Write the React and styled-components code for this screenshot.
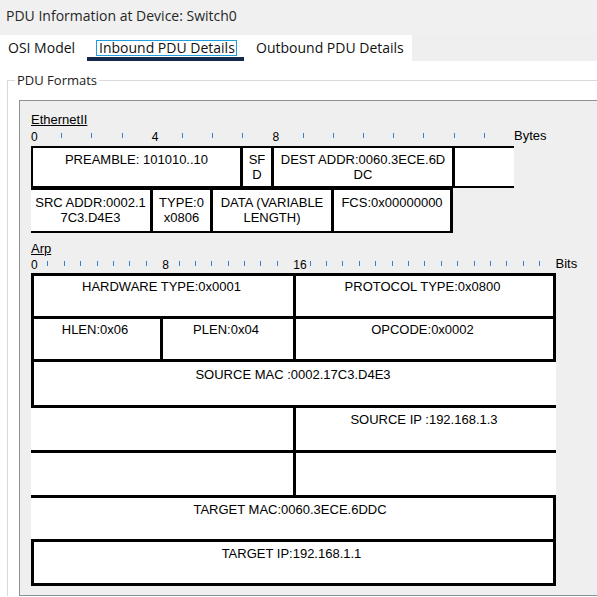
import React from "react"
import styled, { createGlobalStyle } from "styled-components"

const GlobalStyle = createGlobalStyle`
  html, body {
    margin: 0;
    padding: 0;
    background: #fff;
    overflow: hidden;
  }
`

const Window = styled.div`
  width: 597px;
  height: 597px;
  overflow: hidden;
  display: flex;
  flex-direction: column;
  font-family: "Open Sans", "Noto Sans", sans-serif;
`

const TitleBar = styled.div`
  height: 35px;
  box-sizing: border-box;
  background: #f0f0f0;
  padding: 6px 0 0 6px;
  font-size: 14px;
  color: #262626;
  white-space: nowrap;
`

const TabStrip = styled.div`
  display: flex;
  height: 26px;
  background: #efefef;
`

const Tab = styled.div`
  width: ${p => p.$w}px;
  box-sizing: border-box;
  height: 26px;
  background: #fff;
  padding: 3px 0 0 ${p => p.$pl}px;
  font-size: 14px;
  line-height: 19px;
  color: #111;
  white-space: nowrap;
  border-bottom: 4px solid ${p => (p.$active ? "#14294b" : "transparent")};
`

const FocusText = styled.span`
  display: inline-block;
  padding: 0 1px 0 2px;
  line-height: 14px;
  outline: 1px solid #1e9fdc;
`

const Body = styled.div`
  flex: 1;
  background: #fff;
  padding-left: 7px;
`

const Group = styled.fieldset`
  margin: 10px 0 0 0;
  padding: 0;
  min-width: 0;
  width: 640px;
  border: 1px solid #dadada;
  border-right: none;
  border-bottom: none;
`

const GroupTitle = styled.legend`
  margin-left: 7px;
  padding: 0 2px;
  font-size: 13px;
  line-height: 18px;
  color: #222;
`

const Panel = styled.div`
  margin: 11px 0 0 11px;
  height: 496px;
  box-sizing: border-box;
  background: #efefef;
  border: 1px solid #8c9097;
  border-right: none;
  padding-left: 11px;
  font-family: "Liberation Sans", Arial, sans-serif;
  color: #000;
`

const SectionLabel = styled.div`
  margin-top: ${p => p.$mt}px;
  font-size: 13px;
  line-height: 15px;
  text-decoration: underline;
`

const Ruler = styled.div`
  display: flex;
  margin-top: ${p => p.$mt}px;
  height: ${p => p.$h}px;
`

const Slot = styled.div`
  flex: none;
  width: ${p => p.$w}px;
  font-size: 12px;
  line-height: 12px;
  white-space: nowrap;
`

const Tick = styled.span`
  display: block;
  width: 1px;
  height: 5px;
  margin-top: 2px;
  background: #3a7fd4;
`

const Unit = styled.span`
  font-size: 13px;
  line-height: 13px;
  margin-top: -2px;
`

const Table = styled.div`
  display: flex;
  flex-direction: column;
`

const Row = styled.div`
  display: flex;
  height: ${p => p.$h}px;
`

const Cell = styled.div`
  flex: none;
  box-sizing: border-box;
  width: ${p => p.$w}px;
  height: 100%;
  background: #fff;
  border-style: solid;
  border-color: #000;
  border-width: ${p => p.$t || 0}px ${p => p.$r || 0}px ${p => p.$b || 0}px ${p => p.$l || 0}px;
  padding-top: ${p => p.$pt || 0}px;
  padding-right: ${p => p.$pr || 0}px;
  text-align: center;
  font-size: 13px;
  line-height: 15px;
  white-space: nowrap;
`

const ethMarks = { 0: "0", 4: "4", 8: "8" }
const arpMarks = { 0: "0", 8: "8", 16: "16" }

const Scale = ({ count, width, marks, unit, mt, h }) => (
  <Ruler $mt={mt} $h={h}>
    {Array.from({ length: count }, (_, i) => (
      <Slot key={i} $w={width}>
        {marks[i] ? marks[i] : <Tick />}
      </Slot>
    ))}
    <Unit>{unit}</Unit>
  </Ruler>
)

export default function App() {
  return (
    <Window>
      <GlobalStyle />
      <TitleBar>PDU Information at Device: Switch0</TitleBar>
      <TabStrip>
        <Tab $w={87} $pl={8}>OSI Model</Tab>
        <Tab $w={157} $pl={10} $active>
          <FocusText>Inbound PDU Details</FocusText>
        </Tab>
        <Tab $w={168} $pl={12}>Outbound PDU Details</Tab>
      </TabStrip>
      <Body>
        <Group>
          <GroupTitle>PDU Formats</GroupTitle>
          <Panel>
            <SectionLabel $mt={11}>EthernetII</SectionLabel>
            <Scale count={16} width={30.19} marks={ethMarks} unit="Bytes" mt={4} h={15} />
            <Table>
              <Row $h={42}>
                <Cell $w={212} $t={2} $b={2} $l={2} $r={3} $pt={4}>PREAMBLE: 101010..10</Cell>
                <Cell $w={31} $t={2} $b={2} $r={3} $pt={4}>SF<br />D</Cell>
                <Cell $w={181} $t={2} $b={2} $r={3} $pt={4}>DEST ADDR:0060.3ECE.6D<br />DC</Cell>
                <Cell $w={59} $t={2} $b={2} />
              </Row>
              <Row $h={45}>
                <Cell $w={122} $t={2} $b={2} $r={3} $pt={5}>SRC ADDR:0002.1<br />7C3.D4E3</Cell>
                <Cell $w={60} $t={2} $b={2} $r={3} $pt={5}>TYPE:0<br />x0806</Cell>
                <Cell $w={121} $t={2} $b={2} $r={3} $pt={5}>DATA (VARIABLE<br />LENGTH)</Cell>
                <Cell $w={119} $t={2} $b={2} $r={3} $pt={5}>FCS:0x00000000</Cell>
              </Row>
            </Table>

            <SectionLabel $mt={8}>Arp</SectionLabel>
            <Scale count={32} width={16.406} marks={arpMarks} unit="Bits" mt={3} h={14} />
            <Table>
              <Row $h={43}>
                <Cell $w={265} $t={3} $l={3} $r={3} $pt={3} $pr={4}>HARDWARE TYPE:0x0001</Cell>
                <Cell $w={260} $t={3} $r={3} $pt={3} $pr={4}>PROTOCOL TYPE:0x0800</Cell>
              </Row>
              <Row $h={43}>
                <Cell $w={132} $t={3} $l={3} $r={3} $pt={3} $pr={4}>HLEN:0x06</Cell>
                <Cell $w={133} $t={3} $r={3} $pt={3} $pr={4}>PLEN:0x04</Cell>
                <Cell $w={260} $t={3} $r={3} $pt={3} $pr={4}>OPCODE:0x0002</Cell>
              </Row>
              <Row $h={46}>
                <Cell $w={525} $t={3} $l={3} $pt={5} $pr={4}>SOURCE MAC :0002.17C3.D4E3</Cell>
              </Row>
              <Row $h={45}>
                <Cell $w={265} $t={3} $r={3} />
                <Cell $w={260} $t={3} $pt={4} $pr={4}>SOURCE IP :192.168.1.3</Cell>
              </Row>
              <Row $h={45}>
                <Cell $w={265} $t={3} $r={3} />
                <Cell $w={260} $t={3} />
              </Row>
              <Row $h={44}>
                <Cell $w={525} $t={3} $r={3} $pt={4} $pr={4}>TARGET MAC:0060.3ECE.6DDC</Cell>
              </Row>
              <Row $h={47}>
                <Cell $w={525} $t={3} $b={3} $l={3} $r={3} $pt={4} $pr={4}>TARGET IP:192.168.1.1</Cell>
              </Row>
            </Table>
          </Panel>
        </Group>
      </Body>
    </Window>
  )
}
